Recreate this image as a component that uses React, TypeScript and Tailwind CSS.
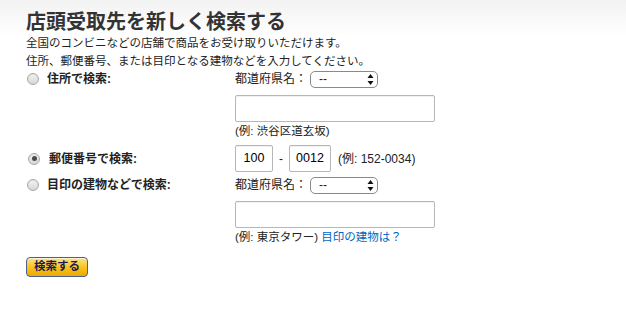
const FONT = "font-['Liberation_Sans','Noto_Sans_CJK_JP',sans-serif]";

function Radio({ checked = false }: { checked?: boolean }) {
  return (
    <span className="ml-[1px] flex h-[12px] w-[12px] shrink-0 items-center justify-center rounded-full border border-[#a9a9a9] bg-[linear-gradient(to_bottom,#f4f4f4,#d6d6d6)] shadow-[inset_0_1px_1px_rgba(0,0,0,0.08)]">
      {checked && <span className="h-[5px] w-[5px] rounded-full bg-[#4a4a4a]" />}
    </span>
  );
}

function FakeSelect() {
  return (
    <div className="relative flex h-[17px] w-[68px] items-center rounded-[5px] border border-[#8a8a8a] bg-white pl-[8px] text-[12px] leading-none text-[#222]">
      --
      <span className="absolute right-[3px] top-[1px] flex flex-col items-center text-[#111]">
        <svg width="7" height="13" viewBox="0 0 7 13">
          <path d="M3.5 1 L6.5 5 L0.5 5 Z" fill="currentColor" />
          <path d="M3.5 12 L6.5 8 L0.5 8 Z" fill="currentColor" />
        </svg>
      </span>
    </div>
  );
}

function Field({ className = "", value }: { className?: string; value?: string }) {
  return (
    <div
      className={`flex h-[27px] items-center justify-center rounded-[2px] border border-[#b7b7b7] bg-white text-[12.5px] text-black shadow-[inset_0_1px_1px_rgba(0,0,0,0.06)] ${className}`}
    >
      {value}
    </div>
  );
}

function Label({ children, className = "" }: { children: string; className?: string }) {
  return <span className={`text-[12px] font-bold text-[#222] ${className}`}>{children}</span>;
}

export default function App() {
  return (
    <div
      className={`${FONT} min-h-[328px] w-full bg-[linear-gradient(to_bottom,#f2f2f2,#ffffff_36px)] pl-[26px] pt-[10px] text-[#222]`}
    >
      <h1 className="text-[20px] font-bold leading-[24px] text-[#333]">店頭受取先を新しく検索する</h1>
      <p className="text-[11.5px] leading-[18px] text-[#222]">
        全国のコンビニなどの店舗で商品をお受け取りいただけます。
        <br />
        住所、郵便番号、または目印となる建物などを入力してください。
      </p>

      {/* 住所 */}
      <div className="flex">
        <div className="flex h-[18px] w-[209px] items-center gap-[8px]">
          <Radio />
          <Label>住所で検索:</Label>
        </div>
        <div className="flex flex-col">
          <div className="flex h-[18px] items-center gap-[3px] text-[12px]">
            <span>都道府県名：</span>
            <FakeSelect />
          </div>
          <Field className="mt-[7px] w-[200px]" />
          <span className="mt-[1px] text-[11.5px] leading-[16px]">(例: 渋谷区道玄坂)</span>
        </div>
      </div>

      {/* 郵便番号 */}
      <div className="mt-[6px] flex">
        <div className="flex h-[27px] w-[209px] items-center gap-[9px] pl-[1px]">
          <Radio checked />
          <Label>郵便番号で検索:</Label>
        </div>
        <div className="flex items-center text-[12px]">
          <Field className="w-[38px]" value="100" />
          <span className="mx-[6px]">-</span>
          <Field className="w-[42px]" value="0012" />
          <span className="ml-[7px] text-[12px]">(例: 152-0034)</span>
        </div>
      </div>

      {/* 目印 */}
      <div className="mt-[4px] flex">
        <div className="flex h-[18px] w-[209px] items-center gap-[8px]">
          <Radio />
          <Label>目印の建物などで検索:</Label>
        </div>
        <div className="flex flex-col">
          <div className="flex h-[18px] items-center gap-[3px] text-[12px]">
            <span>都道府県名：</span>
            <FakeSelect />
          </div>
          <Field className="mt-[7px] w-[200px]" />
          <span className="mt-[1px] text-[11.5px] leading-[16px]">
            (例: 東京タワー) <a className="text-[#0066c0]">目印の建物は？</a>
          </span>
        </div>
      </div>

      <button className="mt-[12px] flex h-[20px] w-[62px] items-center justify-center rounded-[4px] border border-[#4f5f8f] bg-[linear-gradient(to_bottom,#fde48a,#f7c21a_55%,#eeaa00)] text-[11.5px] font-bold text-[#1d1d55] shadow-[inset_0_1px_0_rgba(255,255,255,0.6)]">
        検索する
      </button>
    </div>
  );
}
